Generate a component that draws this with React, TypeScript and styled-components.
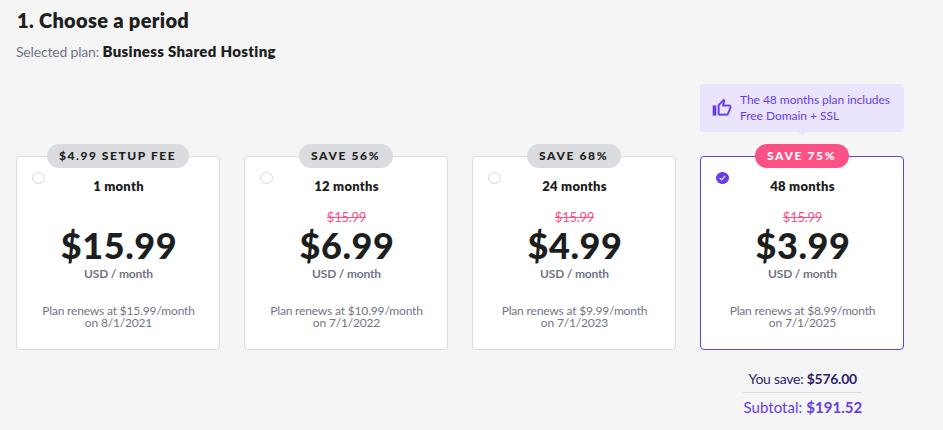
import React from 'react';
import styled, { createGlobalStyle } from 'styled-components';

const Global = createGlobalStyle`
  * { box-sizing: border-box; }
  body { margin: 0; background: #f5f5f5; }
`;

const Page = styled.main`
  width: 943px;
  height: 430px;
  padding: 8px 0 0 16px;
  overflow: hidden;
  background: #f5f5f5;
  color: #1d1e20;
  font-family: Lato, 'Open Sans', sans-serif;
`;

const Heading = styled.h1`
  margin: 0 0 0 1px;
  font-size: 20px;
  line-height: 24px;
  font-weight: 800;
  letter-spacing: 0.32px;
`;

const Selected = styled.p`
  margin: 9px 0 0;
  height: 20px;
  line-height: 20px;
  font-size: 14px;
  letter-spacing: -0.18px;
  color: #727586;
  white-space: nowrap;
`;

const PlanName = styled.strong`
  font-size: 15px;
  letter-spacing: 0.32px;
  color: #1d1e20;
  font-weight: 800;
`;

const Columns = styled.section`
  display: flex;
  gap: 24px;
  margin-top: 23px;
`;

const Column = styled.div`
  width: 204px;
  display: flex;
  flex-direction: column;
  align-items: center;
`;

const NoticeSlot = styled.div`
  width: 204px;
  height: 72px;
`;

const Notice = styled.div`
  position: relative;
  display: flex;
  align-items: center;
  height: 48px;
  padding-left: 12px;
  gap: 8px;
  border-radius: 4px;
  background: #ebe4ff;
  color: #673de6;
  font-size: 12px;
  line-height: 16px;
  letter-spacing: -0.04px;
  white-space: nowrap;

  &::after {
    content: '';
    position: absolute;
    left: 98px;
    top: 48px;
    border: 4px solid transparent;
    border-top-color: #ebe4ff;
    border-bottom: 0;
  }
`;

const Card = styled.article<{ $active: boolean }>`
  position: relative;
  width: 204px;
  height: 194px;
  padding: 19px 0 0 1px;
  display: flex;
  flex-direction: column;
  align-items: center;
  border: 1px solid ${p => (p.$active ? '#673de6' : '#dadce0')};
  border-radius: 4px;
  background: #fff;
  white-space: nowrap;
`;

const Badge = styled.div<{ $active: boolean; $wide: boolean }>`
  position: absolute;
  top: -13px;
  left: 50%;
  transform: translateX(-50%);
  width: ${p => (p.$wide ? 142 : 94)}px;
  height: 24px;
  padding-left: 12px;
  border-radius: 12px;
  background: ${p => (p.$active ? '#fc5185' : '#dadce0')};
  color: ${p => (p.$active ? '#fff' : '#1d1e20')};
  font-size: 12px;
  line-height: 24px;
  font-weight: 900;
  letter-spacing: ${p => (p.$wide ? 1.55 : 1.63)}px;
`;

const Radio = styled.div<{ $active: boolean }>`
  position: absolute;
  left: 15px;
  top: 15px;
  width: 13px;
  height: 12px;
  border: 1px solid ${p => (p.$active ? '#673de6' : '#dadce0')};
  border-radius: 50%;
  background: ${p => (p.$active ? '#673de6' : '#fff')};
  display: flex;
  align-items: center;
  justify-content: center;
`;

const Term = styled.h2`
  margin: 0;
  font-size: 13px;
  line-height: 20px;
  font-weight: 800;
  letter-spacing: 0.25px;
`;

const OldPrice = styled.div`
  margin-top: 13px;
  height: 16px;
  font-size: 13px;
  line-height: 16px;
  letter-spacing: -0.25px;
  color: #fc5185;
  text-decoration: line-through;
`;

const Price = styled.div`
  padding-left: 1px;
  font-size: 36px;
  line-height: 40px;
  font-weight: 900;
  letter-spacing: 0.6px;
`;

const Unit = styled.div`
  margin-top: 2px;
  font-size: 12px;
  line-height: 14px;
  font-weight: 700;
  letter-spacing: -0.18px;
  color: #727586;
`;

const Renewal = styled.div`
  margin-top: 24px;
  font-size: 12px;
  line-height: 12px;
  letter-spacing: -0.17px;
  text-align: center;
  color: #727586;
`;

const Totals = styled.div`
  width: 119px;
  margin-top: 19px;
  display: flex;
  flex-direction: column;
  white-space: nowrap;
`;

const Savings = styled.div`
  height: 24px;
  padding-left: 6px;
  border-bottom: 1px solid #dadce0;
  font-size: 14px;
  line-height: 20px;
  letter-spacing: -0.27px;
  color: #2f1c6a;
`;

const Subtotal = styled.div`
  margin-top: 4px;
  padding-left: 1px;
  font-size: 15px;
  line-height: 20px;
  letter-spacing: 0.04px;
  color: #673de6;
`;

interface Plan {
  badge: string;
  term: string;
  old?: string;
  price: string;
  renew: string;
  date: string;
  active?: boolean;
}

const plans: Plan[] = [
  { badge: '$4.99 SETUP FEE', term: '1 month', price: '$15.99', renew: '$15.99', date: '8/1/2021' },
  { badge: 'SAVE 56%', term: '12 months', old: '$15.99', price: '$6.99', renew: '$10.99', date: '7/1/2022' },
  { badge: 'SAVE 68%', term: '24 months', old: '$15.99', price: '$4.99', renew: '$9.99', date: '7/1/2023' },
  { badge: 'SAVE 75%', term: '48 months', old: '$15.99', price: '$3.99', renew: '$8.99', date: '7/1/2025', active: true },
];

const ThumbUp = () => (
  <svg width="20" height="20" viewBox="0 0 24 24" fill="currentColor" stroke="currentColor" strokeWidth=".3">
    <path d="M9 21h9c.83 0 1.54-.5 1.84-1.22l3.02-7.05c.09-.23.14-.47.14-.73v-2c0-1.1-.9-2-2-2h-6.31l.95-4.57.03-.32c0-.41-.17-.79-.44-1.06L14.17 1 7.58 7.59C7.22 7.95 7 8.45 7 9v10c0 1.1.9 2 2 2zM9 9l4.34-4.34L12 10h9v2l-3 7H9V9zM1 9h4v12H1z" />
  </svg>
);

const Check = () => (
  <svg width="7" height="6" viewBox="0 0 7 6" fill="none" stroke="#fff" strokeWidth="1.1">
    <path d="M.7 3.1 2.5 4.8 6.2 1.1" />
  </svg>
);

const PlanCard = ({ plan }: { plan: Plan }) => {
  const active = Boolean(plan.active);
  return (
    <Card $active={active}>
      <Badge $active={active} $wide={plan.badge.length > 8}>{plan.badge}</Badge>
      <Radio $active={active}>{active && <Check />}</Radio>
      <Term>{plan.term}</Term>
      <OldPrice>{plan.old}</OldPrice>
      <Price>{plan.price}</Price>
      <Unit>USD / month</Unit>
      <Renewal>
        Plan renews at {plan.renew}/month
        <br />
        on {plan.date}
      </Renewal>
    </Card>
  );
};

export default function App() {
  return (
    <>
      <Global />
      <Page>
        <Heading>1. Choose a period</Heading>
        <Selected>
          Selected plan: <PlanName>Business Shared Hosting</PlanName>
        </Selected>
        <Columns>
          {plans.map(plan => (
            <Column key={plan.term}>
              <NoticeSlot>
                {plan.active && (
                  <Notice>
                    <ThumbUp />
                    <div>
                      The 48 months plan includes
                      <br />
                      Free Domain + SSL
                    </div>
                  </Notice>
                )}
              </NoticeSlot>
              <PlanCard plan={plan} />
              {plan.active && (
                <Totals>
                  <Savings>
                    You save: <b>$576.00</b>
                  </Savings>
                  <Subtotal>
                    Subtotal: <b>$191.52</b>
                  </Subtotal>
                </Totals>
              )}
            </Column>
          ))}
        </Columns>
      </Page>
    </>
  );
}
